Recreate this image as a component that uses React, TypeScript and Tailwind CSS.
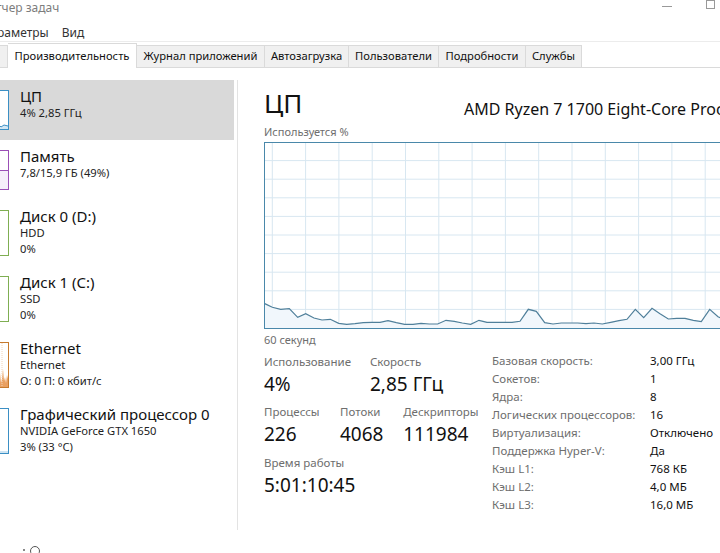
import React from "react";

const pts: [number, number][] = [
  [264, 303.3], [272.3, 307.3], [280.7, 309.3], [289.3, 308.7], [297.7, 317.3], [305.7, 313.7],
  [314, 318], [322, 320], [330.3, 319.3], [338.7, 323.3], [346.7, 324.3], [355, 323.7],
  [363.3, 322.7], [371.7, 322.3], [380, 322.3], [388, 320.7], [396.3, 322.7], [404.7, 324.3],
  [413, 324.3], [421, 323.3], [429.3, 324], [437.7, 324], [446, 320.3], [454.3, 321.3],
  [462.3, 323], [470.7, 324.3], [479, 320.3], [487, 322.3], [495.3, 322.3], [503.7, 322.3],
  [512, 322.3], [520, 321.3], [528.3, 309.3], [536.3, 311.3], [544.7, 322.7], [553, 324],
  [561.3, 323], [569.3, 323], [577.7, 323], [586, 323.7], [594, 323], [602.3, 324],
  [610.7, 322.3], [619, 320.7], [627, 319.3], [635.3, 309.3], [643.7, 317.7], [652, 308.3],
  [660, 313.7], [668.3, 319], [676.7, 318.3], [685, 318.3], [693.3, 320.3], [701.3, 321.7],
  [709.7, 309.3], [718, 316.7], [726, 320], [734, 322], [742, 321], [750, 322], [762, 322],
];

const GX = 264;
const GY = 142;
const GW = 498;
const GH = 186;

function Graph() {
  const local = pts.map(([x, y]) => [x - GX, y - GY] as [number, number]);
  const line = local.map(([x, y]) => `${x},${y}`).join(" ");
  const area = `0,${GH} ${line} ${GW},${GH}`;
  const vlines: number[] = [];
  for (let x = 8.3; x < GW; x += 33.3) vlines.push(x);
  const hlines: number[] = [];
  for (let i = 1; i < 10; i++) hlines.push((GH * i) / 10);
  return (
    <div className="w-[498px] h-[187px] border border-[#4a88aa] shrink-0 mt-[2px]">
      <svg width={GW - 2} height={GH - 1} viewBox={`1 1 ${GW - 2} ${GH - 1}`} className="block">
        {vlines.map((x, i) => (
          <line key={"v" + i} x1={x} y1={0} x2={x} y2={GH} stroke="#d8e7f1" strokeWidth={1} />
        ))}
        {hlines.map((y, i) => (
          <line key={"h" + i} x1={0} y1={y} x2={GW} y2={y} stroke="#d8e7f1" strokeWidth={1} />
        ))}
        <polygon points={area} fill="#f1f7fc" />
        <polyline points={line} fill="none" stroke="#4f7f9a" strokeWidth={1.2} />
      </svg>
    </div>
  );
}

type Item = {
  title: string;
  lines: string[];
  color: string;
  fill?: React.ReactNode;
  selected?: boolean;
};

function Thumb({ color, h, children }: { color: string; h: number; children?: React.ReactNode }) {
  return (
    <div
      className="relative w-[50px] ml-[-41px] mt-[10px] border bg-white overflow-hidden shrink-0"
      style={{ borderColor: color, height: h }}
    >
      {children}
    </div>
  );
}

function SideItem({ item }: { item: Item }) {
  const three = item.lines.length === 2;
  return (
    <div
      className={
        "flex items-start w-[234px] " +
        (three ? "h-[66px] " : "h-[60px] ") +
        (item.selected ? "bg-[#d9d9d9]" : "")
      }
    >
      <Thumb color={item.color} h={three ? 46 : 40}>
        {item.fill}
      </Thumb>
      <div className="ml-[11px] pt-[7px] flex flex-col">
        <div className="text-[15px] leading-[18px] text-[#111] whitespace-nowrap">{item.title}</div>
        {item.lines.map((l, i) => (
          <div key={i} className="text-[11.2px] leading-[16px] text-[#222] whitespace-nowrap">
            {l}
          </div>
        ))}
      </div>
    </div>
  );
}

const items: Item[] = [
  {
    title: "ЦП",
    lines: ["4%  2,85 ГГц"],
    color: "#3b8fc4",
    selected: true,
    fill: (
      <svg className="absolute inset-0" width="48" height="38" viewBox="0 0 48 38">
        <polygon points="0,38 0,34 10,36 20,35 30,36 38,33 41,36 44,34 48,35 48,38" fill="#d3e8f5" />
        <polyline points="0,34 10,36 20,35 30,36 38,33 41,36 44,34 48,35" fill="none" stroke="#3b8fc4" strokeWidth="1" />
      </svg>
    ),
  },
  {
    title: "Память",
    lines: ["7,8/15,9 ГБ (49%)"],
    color: "#9b4fb6",
    fill: <div className="absolute left-0 right-0 bottom-0 h-[19px] bg-[#f6eefa] border-t border-[#9b4fb6]" />,
  },
  { title: "Диск 0 (D:)", lines: ["HDD", "0%"], color: "#7fae52" },
  { title: "Диск 1 (C:)", lines: ["SSD", "0%"], color: "#7fae52" },
  {
    title: "Ethernet",
    lines: ["Ethernet", "О: 0 П: 0 кбит/с"],
    color: "#c67a2e",
    fill: (
      <svg className="absolute inset-0" width="48" height="44" viewBox="0 0 48 44">
        <polygon
          points="0,44 36,44 36,40 38,38 39,42 40,30 41,40 42,36 43,26 44,38 45,34 46,40 47,32 48,36 48,44"
          fill="#e9a062"
        />
        <line x1="36" y1="0" x2="36" y2="44" stroke="#f2d3b6" strokeDasharray="1 1" />
        <line x1="42" y1="0" x2="42" y2="44" stroke="#f2d3b6" strokeDasharray="1 1" />
      </svg>
    ),
  },
  {
    title: "Графический процессор 0",
    lines: ["NVIDIA GeForce GTX 1650", "3%  (33 °C)"],
    color: "#3b8fc4",
    fill: <div className="absolute left-0 right-0 bottom-0 h-[2px] bg-[#cfe5f3]" />,
  },
];

const tabs: [string, number][] = [
  ["Журнал приложений", 128],
  ["Автозагрузка", 84],
  ["Пользователи", 90],
  ["Подробности", 87],
  ["Службы", 56],
];

const details: [string, string][] = [
  ["Базовая скорость:", "3,00 ГГц"],
  ["Сокетов:", "1"],
  ["Ядра:", "8"],
  ["Логических процессоров:", "16"],
  ["Виртуализация:", "Отключено"],
  ["Поддержка Hyper-V:", "Да"],
  ["Кэш L1:", "768 КБ"],
  ["Кэш L2:", "4,0 МБ"],
  ["Кэш L3:", "16,0 МБ"],
];

function Stat({ label, value, w }: { label: string; value: string; w: string }) {
  return (
    <div className={"flex flex-col " + w}>
      <div className="text-[11.5px] leading-[18px] text-[#6e6e6e] whitespace-nowrap">{label}</div>
      <div className="text-[19px] leading-[26px] text-[#111] whitespace-nowrap">{value}</div>
    </div>
  );
}

export default function App() {
  return (
    <div
      className="relative w-[720px] h-[553px] overflow-hidden bg-white text-[#111]"
      style={{ fontFamily: '"Noto Sans", "Open Sans", sans-serif' }}
    >
      {/* Title bar */}
      <div className="h-[22px] flex items-start justify-between">
        <div className="text-[12px] leading-[16px] text-[#7d7d7d] ml-[-4px]">тчер задач</div>
        <div className="flex items-center mt-[3px]">
          <div className="w-[10px] h-[1px] bg-[#999] mr-[34px]" />
          <div className="w-[9px] h-[9px] border border-[#999] mr-[5px] mt-[-3px]" />
        </div>
      </div>
      {/* Menu */}
      <div className="h-[20px] flex items-center pt-[2px] text-[12px] text-[#333] border-b border-[#ececec]">
        <span className="ml-[-3px]">раметры</span>
        <span className="ml-[13px]">Вид</span>
      </div>
      {/* Tabs */}
      <div className="h-[26px] flex items-end border-b border-[#dadada] relative">
        <div className="w-[8px] h-[22px] bg-[#f0f0f0] border border-b-0 border-[#dadada] border-l-0" />
        <div className="w-[129px] h-[25px] flex items-center justify-center bg-white border border-b-0 border-l-0 border-[#dadada] mb-[-1px] text-[11.2px] text-[#111] whitespace-nowrap">
          Производительность
        </div>
        {tabs.map(([t, w]) => (
          <div
            key={t}
            className="h-[22px] flex items-center justify-center bg-[#f0f0f0] border border-b-0 border-l-0 border-[#dadada] text-[11.2px] text-[#111] whitespace-nowrap"
            style={{ width: w }}
          >
            {t}
          </div>
        ))}
      </div>
      {/* Body */}
      <div className="flex mt-[12px]">
        <div className="w-[237px] shrink-0 flex flex-col">
          {items.map((it) => (
            <SideItem key={it.title} item={it} />
          ))}
        </div>
        <div className="w-[1px] h-[450px] bg-[#e3e3e3] shrink-0" />
        <div className="flex flex-col pl-[26px] shrink-0">
          <div className="flex items-end h-[42px]">
            <div className="text-[26px] leading-[32px] text-[#111] w-[200px] pb-[3px]">ЦП</div>
            <div className="text-[16px] leading-[20px] text-[#111] whitespace-nowrap pb-[3px]">
              AMD Ryzen 7 1700 Eight-Core Processor
            </div>
          </div>
          <div className="text-[11px] leading-[16px] text-[#6e6e6e] mt-[2px]">Используется %</div>
          <Graph />
          <div className="text-[11px] leading-[16px] text-[#6e6e6e] mt-[3px]">60 секунд</div>
          <div className="flex mt-[5px]">
            <div className="flex flex-col w-[228px]">
              <div className="flex">
                <Stat label="Использование" value="4%" w="w-[106px]" />
                <Stat label="Скорость" value="2,85 ГГц" w="w-[110px]" />
              </div>
              <div className="flex mt-[6px]">
                <Stat label="Процессы" value="226" w="w-[77px]" />
                <Stat label="Потоки" value="4068" w="w-[64px]" />
                <Stat label="Дескрипторы" value="111984" w="w-[90px]" />
              </div>
              <div className="flex mt-[7px]">
                <Stat label="Время работы" value="5:01:10:45" w="w-[120px]" />
              </div>
            </div>
            <div className="flex flex-col mt-[-1px]">
              {details.map(([k, v]) => (
                <div key={k} className="flex h-[18px] items-center text-[11.5px]">
                  <div className="w-[158px] text-[#6e6e6e] whitespace-nowrap">{k}</div>
                  <div className="text-[#111] whitespace-nowrap">{v}</div>
                </div>
              ))}
            </div>
          </div>
        </div>
      </div>
      {/* bottom partial icons */}
      <div className="absolute left-[30px] top-[546px] w-[10px] h-[10px] rounded-full border border-[#555]" />
      <div className="absolute left-[23px] top-[549px] w-[2px] h-[2px] bg-[#888]" />
    </div>
  );
}
